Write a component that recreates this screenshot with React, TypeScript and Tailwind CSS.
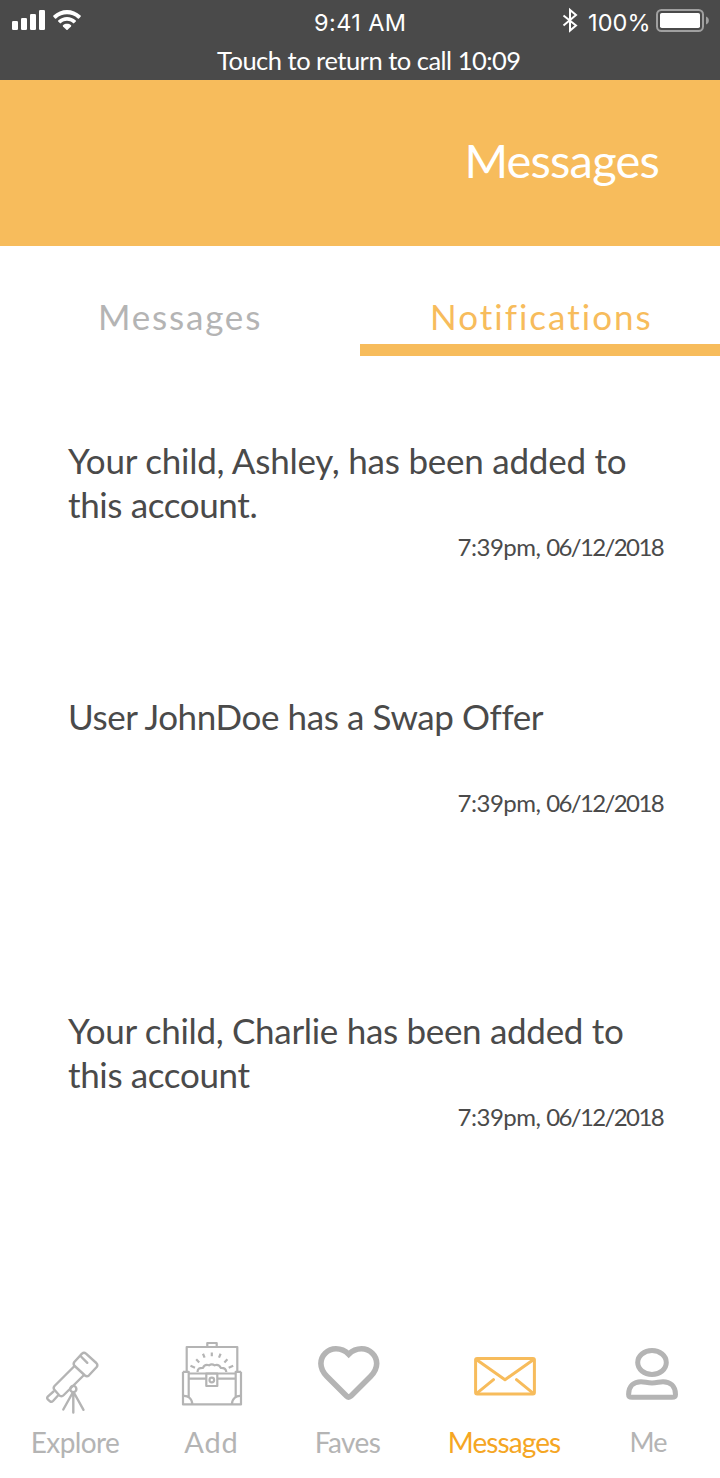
import type { ReactNode } from "react";

const notifications = [
  {
    lines: [
      { text: "Your child, Ashley, has been added to", tracking: "tracking-[-0.23px]" },
      { text: "this account.", tracking: "tracking-[-0.38px]" },
    ],
    height: "h-[256px]",
  },
  { lines: [{ text: "User JohnDoe has a Swap Offer", tracking: "tracking-[-0.41px]" }], height: "h-[314px]" },
  {
    lines: [
      { text: "Your child, Charlie has been added to", tracking: "tracking-[-0.31px]" },
      { text: "this account", tracking: "tracking-[-0.36px]" },
    ],
    height: "h-[256px]",
  },
];

function StatusBar() {
  return (
    <header className="h-[80px] bg-[#4a4a4a] text-white">
      <div className="flex h-[43px] items-start">
        <svg className="h-[43px] w-[314px] shrink-0" viewBox="0 0 314 43" fill="white">
          <rect x="12" y="21" width="6" height="9" rx="1.3" />
          <rect x="21" y="18" width="6" height="12" rx="1.3" />
          <rect x="30" y="14" width="6" height="16" rx="1.3" />
          <rect x="39" y="10" width="6" height="20" rx="1.3" />
          <path d="M53.4 15.6C61 8 73 8 80.6 15.6Q81.2 16.2 80.6 16.8L79 18.4Q78.4 19 77.8 18.4C71.8 12.8 62.2 12.8 56.2 18.4Q55.6 19 55 18.4L53.4 16.8Q52.8 16.2 53.4 15.6Z" />
          <path d="M58.2 20.4C63.1 15.7 70.9 15.7 75.8 20.4Q76.4 21 75.8 21.6L74.2 23.1Q73.6 23.7 73 23.1C69.6 20 64.4 20 61 23.1Q60.4 23.7 59.8 23.1L58.2 21.6Q57.6 21 58.2 20.4Z" />
          <path d="M63 25.2C65.2 23.4 68.8 23.4 71 25.2Q71.6 25.8 71 26.4L67.6 29.8Q67 30.3 66.4 29.8L63 26.4Q62.4 25.8 63 25.2Z" />
        </svg>
        <span className="w-[240px] whitespace-nowrap pt-[8px] font-['Inter',sans-serif] text-[23.5px] leading-[30px] tracking-[0.4px]">9:41 AM</span>
        <svg className="h-[43px] w-[34px] shrink-0" viewBox="554 0 34 43" fill="none" stroke="white" strokeWidth="2">
          <path d="M563.5 15.5L576 25.5L570 30.5V10L576 15L563.5 25.5" />
        </svg>
        <span className="w-[64px] whitespace-nowrap pt-[8px] font-['Inter',sans-serif] text-[23.5px] leading-[30px] tracking-[0.1px]">100%</span>
        <svg className="h-[43px] w-[68px] shrink-0" viewBox="652 0 68 43">
          <rect x="657" y="10" width="46" height="21" rx="4.5" fill="none" stroke="#a0a0a0" strokeWidth="2" />
          <rect x="660" y="13" width="40" height="15" rx="1.8" fill="white" />
          <path d="M706 16.5C709.8 17.8 709.8 23.2 706 24.5Z" fill="#a0a0a0" />
        </svg>
      </div>
      <p className="whitespace-nowrap pl-[217px] text-[25.5px] leading-[34px] tracking-[-0.5px]">Touch to return to call 10:09</p>
    </header>
  );
}

function NavItem({ width, label, children }: { width: string; label: ReactNode; children: ReactNode }) {
  return (
    <a className={`flex flex-col items-center ${width}`}>
      {children}
      {label}
    </a>
  );
}

export default function App() {
  return (
    <div className="flex h-[1478px] w-[720px] flex-col overflow-hidden bg-white font-['Lato',sans-serif] text-[#4a4a4a]">
      <StatusBar />
      <div className="flex h-[166px] justify-end bg-[#f7bc5c] pr-[61px] pt-[50px]">
        <h1 className="whitespace-nowrap text-[47px] leading-[60px] tracking-[-0.8px] text-white">Messages</h1>
      </div>
      <nav className="flex h-[192px] pt-[48px] text-[35px] leading-[44px]">
        <div className="w-[360px] whitespace-nowrap pl-[98px] tracking-[1.8px] text-[#b4b4b4]">Messages</div>
        <div className="flex h-[62px] w-[360px] flex-col border-b-12 border-[#f7bc5c]">
          <span className="whitespace-nowrap pl-[70px] tracking-[2px] text-[#f7bc5c]">Notifications</span>
        </div>
      </nav>
      <main className="h-[898px]">
        {notifications.map((item, i) => (
          <article key={i} className={`${item.height} pl-[68px] pr-[57px]`}>
            <div className="h-[94px] text-[35px] leading-[44px]">
              {item.lines.map((line) => (
                <p key={line.text} className={`whitespace-nowrap ${line.tracking}`}>{line.text}</p>
              ))}
            </div>
            <time className="block whitespace-nowrap text-right text-[24px] leading-[30px] tracking-[-1.62px]">
              <span className="tracking-[-0.5px]">7:39pm, </span>06/12/2018
            </time>
          </article>
        ))}
      </main>
      <footer className="flex h-[142px] text-[28px] leading-[36px] text-[#b4b4b4]">
        <NavItem width="w-[150px]" label={<span className="whitespace-nowrap tracking-[-0.6px]">Explore</span>}>
          <svg className="h-[88px] w-[150px] shrink-0" viewBox="0 1336 150 88" fill="none" stroke="#b4b4b4" strokeWidth="2.4" strokeLinecap="round" strokeLinejoin="round">
            <path d="M82 1353.6Q84 1352 86 1353.6L96.3 1363Q98.2 1365 96.7 1367L89 1375.3Q87 1377.2 85 1375.5L74.7 1366Q72.8 1364 74.3 1362Z" />
            <path d="M81 1356.5L87.3 1362.8M74 1366.5L54.5 1386Q53 1387.7 54.2 1389.5L59 1395Q61.3 1397.5 63.8 1395L83.5 1375.5" />
            <path d="M53.5 1391.5L48 1396.3Q46.5 1398 47.8 1399.3L50 1401.3Q51.5 1402.5 53 1401L57.8 1395.8" />
            <circle cx="73.3" cy="1389" r="3.1" />
            <path d="M73.3 1392.5V1412.5M72.5 1393L63.3 1409.5M74.1 1393L83.5 1409.8" />
          </svg>
        </NavItem>
        <NavItem width="w-[123px]" label={<span className="whitespace-nowrap text-[29px] leading-[35px] tracking-[0.9px]">Add</span>}>
          <svg className="h-[88px] w-[123px] shrink-0" viewBox="150 1336 123 88" fill="none" stroke="#b4b4b4" strokeWidth="2.2" strokeLinejoin="round">
            <path d="M186.7 1372V1347H237.3V1372M207.3 1347V1343H216.7V1347" />
            <path d="M183 1371.8H188.7V1397M241 1371.8H235.7V1397M183 1371.8V1404.4H241V1371.8M188.7 1373.5H235.7M188.7 1378.6H206.3M217.3 1378.6H235.7" />
            <path d="M183 1396C188.5 1395.5 192.3 1399 192.3 1404.4M241 1396C235.7 1395.5 231.9 1399 231.9 1404.4" />
            <path d="M206.3 1373.5H217.3V1386H206.3Z" />
            <circle cx="211.8" cy="1380" r="2.3" />
            <path d="M197.5 1372Q197.5 1367.5 203 1367.8Q204.5 1364 209 1365.3Q211.8 1363.3 214.6 1365.3Q219 1364 220.7 1367.8Q226 1367.5 226.3 1372" />
            <path d="M211.8 1352.5V1356.3M203 1353.8L204.6 1357.6M220.6 1353.8L219 1357.6M196.2 1359.2L199.2 1362.4M227.4 1359.2L224.4 1362.4M190.5 1365.8L195 1367.8M233.2 1365.8L228.7 1367.8" />
          </svg>
        </NavItem>
        <NavItem width="w-[149px]" label={<span className="whitespace-nowrap tracking-[-0.6px]">Faves</span>}>
          <svg className="h-[88px] w-[149px] shrink-0" viewBox="273 1336 149 88" fill="none" stroke="#b4b4b4" strokeWidth="5.6">
            <path d="M348.7 1354.2C345 1350.5 340.5 1348.8 336 1348.8C327.5 1348.8 320.9 1355.5 320.9 1363.5C320.9 1369 323 1372.5 327 1376.5L346.5 1396Q348.7 1398 351 1396L370.5 1376.5C374.5 1372.5 376.7 1369 376.7 1363.5C376.7 1355.5 370 1348.8 361.5 1348.8C357 1348.8 352.5 1350.5 348.7 1354.2Z" />
          </svg>
        </NavItem>
        <NavItem width="w-[164px]" label={<span className="whitespace-nowrap tracking-[-0.9px] text-[#f5a623]">Messages</span>}>
          <svg className="h-[88px] w-[164px] shrink-0" viewBox="422 1336 164 88" fill="none" stroke="#f7bc5c" strokeWidth="3" strokeLinejoin="round">
            <rect x="475.6" y="1358.5" width="58.8" height="35.6" rx="1.5" />
            <path d="M476.3 1359.5L505 1379.7L533.7 1359.5M476.7 1393.3L493.5 1379.7M533.3 1393.3L516.5 1379.7" strokeLinecap="round" />
          </svg>
        </NavItem>
        <NavItem width="w-[124px]" label={<span className="whitespace-nowrap text-[27px] tracking-[-1px]">Me</span>}>
          <svg className="h-[88px] w-[124px] shrink-0" viewBox="586 1336 124 88" fill="none" stroke="#b4b4b4" strokeWidth="5" strokeLinejoin="round">
            <ellipse cx="652" cy="1362.5" rx="14.3" ry="12" />
            <path d="M632 1397.3Q628.6 1397.3 628.6 1394.5C628.6 1386 634 1381.7 641 1381.7C645 1381.7 647 1382.9 652 1382.9C657 1382.9 659 1381.7 663 1381.7C670 1381.7 675.5 1386 675.5 1394.5Q675.5 1397.3 672 1397.3Z" />
          </svg>
        </NavItem>
      </footer>
    </div>
  );
}
